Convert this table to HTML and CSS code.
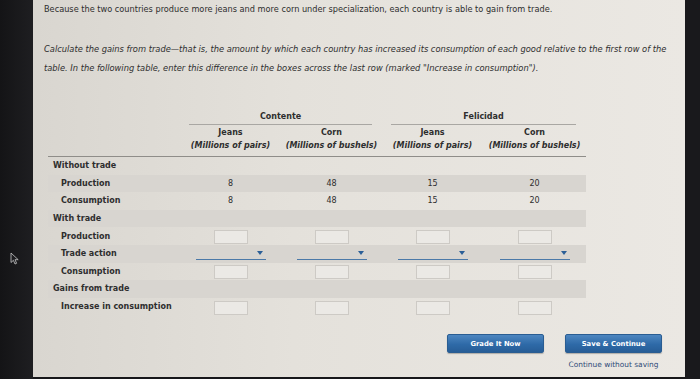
FILE: index.html
```html
<!DOCTYPE html>
<html lang="en">
<head>
  <meta charset="UTF-8">
  <title>Gains from trade</title>
  <link rel="stylesheet" href="styles.css">
</head>
<body>
  <div class="bezel bezel-left">
    <svg class="cursor" width="9" height="13" viewBox="0 0 9 13">
      <path d="M1 1 L1 10.5 L3.4 8.3 L5 12 L6.6 11.3 L5 7.7 L8.2 7.7 Z" fill="#1d1d20" stroke="#c9c9c9" stroke-width="0.8"/>
    </svg>
  </div>

  <div class="page">
    <p class="intro">Because the two countries produce more jeans and more corn under specialization, each country is able to gain from trade.</p>

    <p class="task">Calculate the gains from trade&mdash;that is, the amount by which each country has increased its consumption of each good relative to the first row of the table. In the following table, enter this difference in the boxes across the last row (marked "Increase in consumption").</p>

    <table class="trade">
      <colgroup>
        <col class="col-label">
        <col class="col-val"><col class="col-val"><col class="col-val"><col class="col-last">
      </colgroup>
      <thead>
        <tr class="country">
          <th></th>
          <th colspan="2"><span>Contente</span></th>
          <th colspan="2"><span>Felicidad</span></th>
        </tr>
        <tr class="good">
          <th></th>
          <th>Jeans</th><th>Corn</th><th>Jeans</th><th>Corn</th>
        </tr>
        <tr class="unit">
          <th></th>
          <th>(Millions of pairs)</th><th>(Millions of bushels)</th>
          <th>(Millions of pairs)</th><th>(Millions of bushels)</th>
        </tr>
      </thead>
      <tbody>
        <tr class="section"><td colspan="5">Without trade</td></tr>
        <tr class="shade">
          <td class="sub">Production</td><td>8</td><td>48</td><td>15</td><td>20</td>
        </tr>
        <tr>
          <td class="sub">Consumption</td><td>8</td><td>48</td><td>15</td><td>20</td>
        </tr>
        <tr class="section shade"><td colspan="5">With trade</td></tr>
        <tr>
          <td class="sub">Production</td>
          <td><input class="box" type="text"></td><td><input class="box" type="text"></td>
          <td><input class="box" type="text"></td><td><input class="box" type="text"></td>
        </tr>
        <tr class="shade">
          <td class="sub">Trade action</td>
          <td><span class="select"></span></td><td><span class="select"></span></td>
          <td><span class="select"></span></td><td><span class="select"></span></td>
        </tr>
        <tr>
          <td class="sub">Consumption</td>
          <td><input class="box" type="text"></td><td><input class="box" type="text"></td>
          <td><input class="box" type="text"></td><td><input class="box" type="text"></td>
        </tr>
        <tr class="section shade"><td colspan="5">Gains from trade</td></tr>
        <tr>
          <td class="sub">Increase in consumption</td>
          <td><input class="box" type="text"></td><td><input class="box" type="text"></td>
          <td><input class="box" type="text"></td><td><input class="box" type="text"></td>
        </tr>
      </tbody>
    </table>

    <div class="actions">
      <button class="btn">Grade It Now</button>
      <div class="save">
        <button class="btn">Save &amp; Continue</button>
        <a class="skip" href="#">Continue without saving</a>
      </div>
    </div>
  </div>

  <div class="bezel bezel-right"></div>
</body>
</html>
```

FILE: styles.css
```css
html, body {
  margin: 0;
  height: 100%;
}
body {
  display: flex;
  background: #17171a;
  font-family: "DejaVu Sans", Verdana, sans-serif;
  color: #2e2e2e;
  overflow: hidden;
}
.bezel-left {
  width: 33px;
  background: linear-gradient(to right, #141416, #1e1e21);
  display: flex;
  align-items: flex-start;
}
.cursor {
  margin: 252px 0 0 10px;
}
.bezel-right {
  width: 15px;
  background: #19191c;
}
.page {
  flex: 1;
  padding: 4px 0 0 11px;
  background: linear-gradient(to right, #d9d6d0 0%, #e4e1db 40%, #ebe8e3 100%);
  height: 377px;
  box-sizing: border-box;
}
.intro {
  margin: 0;
  font-size: 8.2px;
  line-height: 10px;
}
.task {
  margin: 26px 0 0;
  font-size: 8.3px;
  line-height: 19px;
  font-style: italic;
  width: 632px;
}

/* table */
.trade {
  margin: 31px 0 0 4px;
  border-collapse: collapse;
  table-layout: fixed;
  width: 538px;
  font-size: 8px;
}
.col-label { width: 132px; }
.col-val { width: 101px; }
.col-last { width: 103px; }
.trade th {
  font-weight: bold;
  text-align: center;
  padding: 0;
}
.country th { height: 16px; vertical-align: bottom; }
.country th span {
  display: block;
  margin: 0 10px 0 9px;
  padding-bottom: 3px;
  border-bottom: 1px solid #a9a7a3;
}
.good th { height: 15px; }
.unit th {
  height: 15px;
  padding-top: 1px;
  font-style: italic;
  vertical-align: top;
  border-bottom: 1px solid #8f8d89;
}
.trade td {
  height: 17.6px;
  padding: 0;
  text-align: center;
}
.trade td.sub,
.section td {
  text-align: left;
  font-weight: bold;
}
.section td { padding-left: 5px; }
.trade td.sub { padding-left: 13px; }
.shade td { background: #d8d5d0; }

.box {
  width: 34px;
  height: 14px;
  box-sizing: border-box;
  border: 1px solid #cdcac5;
  background: #ebe9e5;
  padding: 0;
  margin: 2px 0 0;
  vertical-align: middle;
}
.select {
  display: inline-block;
  width: 70px;
  height: 12px;
  border-bottom: 1.5px solid #4b79a8;
  position: relative;
  vertical-align: middle;
}
.select::after {
  content: "";
  position: absolute;
  right: 3px;
  top: 4px;
  border-left: 3.5px solid transparent;
  border-right: 3.5px solid transparent;
  border-top: 4px solid #2b5f97;
}

/* buttons */
.actions {
  display: flex;
  gap: 21px;
  margin: 19px 0 0 403px;
}
.save {
  display: flex;
  flex-direction: column;
  align-items: center;
}
.btn {
  width: 97px;
  height: 19px;
  border: 1px solid #2a5d92;
  border-radius: 2px;
  background: linear-gradient(#4d86c0, #2e6aa8 55%, #275d96);
  color: #fff;
  font-family: "DejaVu Sans", Verdana, sans-serif;
  font-weight: bold;
  font-size: 6.8px;
  padding: 0;
  box-shadow: 0 1px 1px rgba(0,0,0,0.25);
}
.skip {
  margin-top: 7px;
  font-size: 7.4px;
  color: #2f4c78;
  text-decoration: none;
}
```
